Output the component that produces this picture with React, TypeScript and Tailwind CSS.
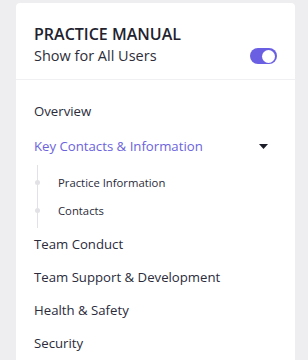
import React, { useState } from 'react';

const items = ['Team Conduct', 'Team Support & Development', 'Health & Safety', 'Security'];

export default function App() {
  const [on, setOn] = useState(true);

  return (
    <div className="min-h-[360px] w-[308px] bg-[#eeeef0] pl-4 pr-[13px] pt-[3px]" style={{ fontFamily: '"Open Sans", sans-serif' }}>
      <div className="h-[357px] overflow-hidden rounded-t bg-white">
        <div className="border-b border-[#f0f0f2] px-[18px] pt-[20px] pb-[13px]">
          <div className="text-[16px] font-semibold leading-[23px] text-[#22222e]">PRACTICE MANUAL</div>
          <div className="flex items-center justify-between">
            <span className="text-[14.5px] leading-[20px] text-[#2e2e3a]">Show for All Users</span>
            <button
              onClick={() => setOn(!on)}
              className={`flex h-[16px] w-[27px] items-center rounded-full px-[2px] ${on ? 'justify-end bg-[#6a5fe3]' : 'justify-start bg-gray-300'}`}
            >
              <span className="h-[13px] w-[13px] rounded-full bg-white" />
            </button>
          </div>
        </div>

        <nav className="pl-[18px] pr-[27px] pt-[21px] text-[13.2px] font-medium text-[#2b2b3b]">
          <div className="leading-[20px]">Overview</div>
          <div className="mt-[15px] flex items-center justify-between leading-[20px] text-[#6c63dc]">
            <span>Key Contacts &amp; Information</span>
            <svg width="9" height="5" viewBox="0 0 9 5">
              <path d="M0 0h9L4.5 5z" fill="#1c1c28" />
            </svg>
          </div>
          <div className="ml-[3px] mt-[9px] border-l border-[#e2e2e6] pt-[5px] pb-[4px] pl-[20px] text-[11.3px] leading-[16px] text-[#2b2b3b]">
            <div className="relative py-[5px]">
              <span className="absolute left-[-23px] top-[10px] h-[5px] w-[5px] rounded-full bg-[#e2e2e6]" />
              Practice Information
            </div>
            <div className="relative mt-[2px] py-[5px]">
              <span className="absolute left-[-23px] top-[10px] h-[5px] w-[5px] rounded-full bg-[#e2e2e6]" />
              Contacts
            </div>
          </div>
          <div className="flex flex-col gap-[13px] pt-[6px]">
            {items.map(i => (
              <div key={i} className="leading-[20px]">{i}</div>
            ))}
          </div>
        </nav>
      </div>
    </div>
  );
}
